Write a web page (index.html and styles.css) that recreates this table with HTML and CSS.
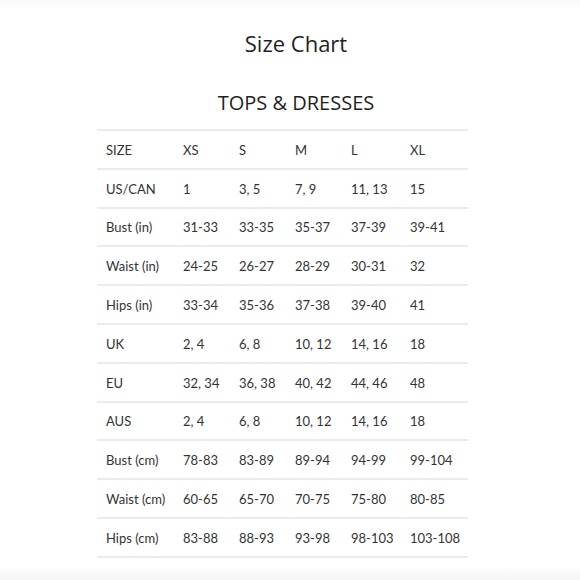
FILE: index.html
```html
<!DOCTYPE html>
<html>
<head>
<meta charset="utf-8">
<link rel="stylesheet" href="styles.css">
</head>
<body>
<div class="page">
  <h1 class="title">Size Chart</h1>
  <h2 class="subtitle">TOPS &amp; DRESSES</h2>
  <div class="chart">
    <div class="row"><span>SIZE</span><span>XS</span><span>S</span><span>M</span><span>L</span><span>XL</span></div>
    <div class="row"><span>US/CAN</span><span>1</span><span>3, 5</span><span>7, 9</span><span>11, 13</span><span>15</span></div>
    <div class="row"><span>Bust (in)</span><span>31-33</span><span>33-35</span><span>35-37</span><span>37-39</span><span>39-41</span></div>
    <div class="row"><span>Waist (in)</span><span>24-25</span><span>26-27</span><span>28-29</span><span>30-31</span><span>32</span></div>
    <div class="row"><span>Hips (in)</span><span>33-34</span><span>35-36</span><span>37-38</span><span>39-40</span><span>41</span></div>
    <div class="row"><span>UK</span><span>2, 4</span><span>6, 8</span><span>10, 12</span><span>14, 16</span><span>18</span></div>
    <div class="row"><span>EU</span><span>32, 34</span><span>36, 38</span><span>40, 42</span><span>44, 46</span><span>48</span></div>
    <div class="row"><span>AUS</span><span>2, 4</span><span>6, 8</span><span>10, 12</span><span>14, 16</span><span>18</span></div>
    <div class="row"><span>Bust (cm)</span><span>78-83</span><span>83-89</span><span>89-94</span><span>94-99</span><span>99-104</span></div>
    <div class="row"><span>Waist (cm)</span><span>60-65</span><span>65-70</span><span>70-75</span><span>75-80</span><span>80-85</span></div>
    <div class="row"><span>Hips (cm)</span><span>83-88</span><span>88-93</span><span>93-98</span><span>98-103</span><span>103-108</span></div>
  </div>
</div>
</body>
</html>
```

FILE: styles.css
```css
html, body {
  margin: 0;
  padding: 0;
  background: #ffffff;
}
.page {
  width: 580px;
  height: 580px;
  display: flex;
  flex-direction: column;
  align-items: center;
  box-sizing: border-box;
  padding-top: 29px;
  background: linear-gradient(to bottom, #f9f9f9 0px, #ffffff 10px, #ffffff 566px, #f5f5f5 580px);
}
.title {
  margin: 0 0 0 12px;
  font-family: "Open Sans", "Liberation Sans", sans-serif;
  font-weight: 400;
  font-size: 22px;
  line-height: 28px;
  color: #1f1f1f;
}
.subtitle {
  margin: 33px 0 0 12px;
  font-family: "Open Sans", "Liberation Sans", sans-serif;
  font-weight: 400;
  font-size: 20px;
  line-height: 26px;
  color: #1f1f1f;
}
.chart {
  margin-top: 13px;
  margin-right: 15px;
  width: 371px;
  border-top: 2px solid #ebebeb;
}
.row {
  display: grid;
  grid-template-columns: 77px 56px 56px 56px 59px 67px;
  height: 36.8px;
  border-bottom: 2px solid #ebebeb;
  align-items: center;
  font-family: "Lato", "Liberation Sans", sans-serif;
  font-size: 13px;
  color: #333333;
}
.row span {
  padding-left: 9px;
  padding-top: 1px;
  white-space: nowrap;
}
```
